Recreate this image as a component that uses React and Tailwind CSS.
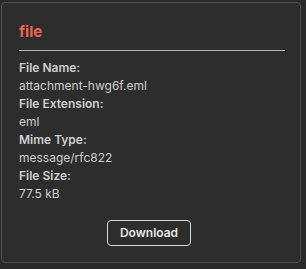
import React from "react";

const rows = [
  ["File Name:", "attachment-hwg6f.eml"],
  ["File Extension:", "eml"],
  ["Mime Type:", "message/rfc822"],
  ["File Size:", "77.5 kB"],
];

export default function App() {
  return (
    <div className="w-[306px] h-[269px] bg-[#2a2a2a] pt-[2px] pl-[1px] font-['Inter',sans-serif]">
      <div className="w-[300px] h-[261px] bg-[#2d2d2d] border border-[#505050] rounded-[4px] pl-[17px] pr-[15px] pt-[19px] flex flex-col">
        <h2 className="text-[15px] leading-[20px] font-bold text-[#ee6352]">file</h2>
        <hr className="mt-[8px] border-0 h-px bg-[#b4b4b4]" />
        <div className="mt-[8px] text-[12px] leading-[18px] text-[#cfcfcf]">
          {rows.map(([label, value]) => (
            <div key={label}>
              <div className="font-semibold">{label}</div>
              <div>{value}</div>
            </div>
          ))}
        </div>
        <div className="flex justify-center mt-[17px] pr-[6px]">
          <button className="h-[26px] px-[12px] border border-[#d8d8d8] rounded-[4px] text-[12px] font-semibold text-[#e4e4e4]">
            Download
          </button>
        </div>
      </div>
    </div>
  );
}
